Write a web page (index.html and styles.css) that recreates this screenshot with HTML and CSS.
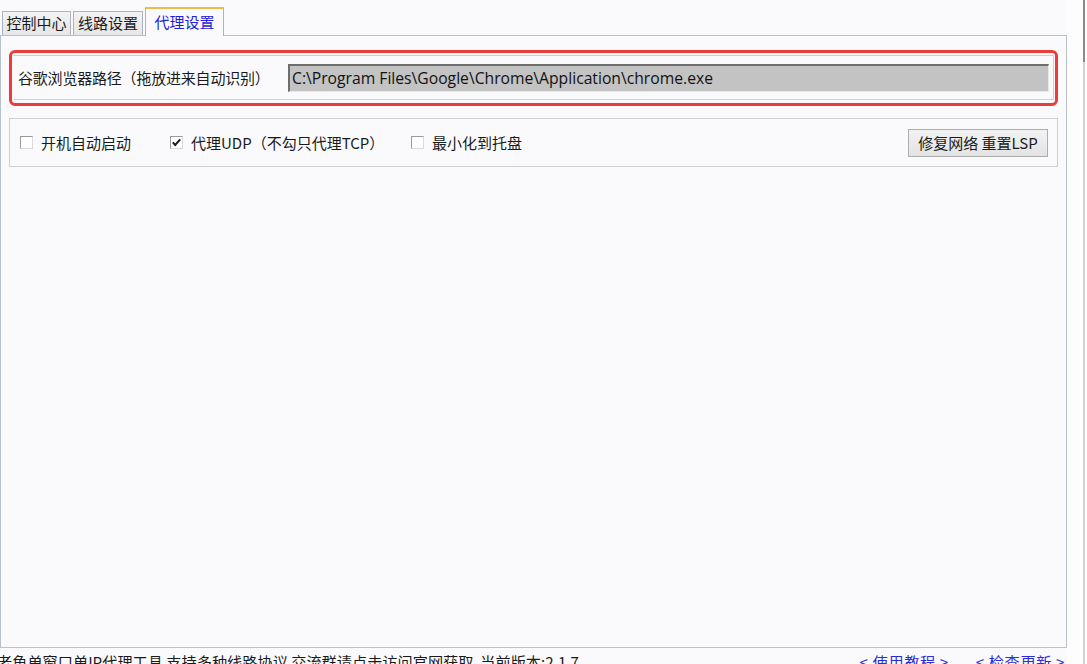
FILE: index.html
```html
<!DOCTYPE html>
<html lang="zh-CN">
<head>
<meta charset="utf-8">
<title>代理设置</title>
<link rel="stylesheet" href="styles.css">
</head>
<body>
<div class="window">
  <div class="main">
    <div class="tabs">
      <div class="tab">控制中心</div>
      <div class="tab">线路设置</div>
      <div class="tab active">代理设置</div>
    </div>
    <div class="pane">
      <div class="highlight">
        <div class="group path-group">
          <span class="path-label">谷歌浏览器路径（拖放进来自动识别）</span>
          <div class="path-field">C:\Program Files\Google\Chrome\Application\chrome.exe</div>
        </div>
      </div>
      <div class="group options">
        <label class="check"><span class="box"></span>开机自动启动</label>
        <label class="check"><span class="box checked"><svg viewBox="0 0 13 13" width="13" height="13"><path d="M2.8 6.3 L5.2 9 L10.2 3.4" fill="none" stroke="#1a1a1a" stroke-width="2"/></svg></span>代理UDP（不勾只代理TCP）</label>
        <label class="check"><span class="box"></span>最小化到托盘</label>
        <button class="btn">修复网络 重置LSP</button>
      </div>
    </div>
    <div class="status">
      <span class="status-text">老鱼单窗口单IP代理工具 支持多种线路协议 交流群请点击访问官网获取&nbsp;&nbsp;当前版本:2.1.7</span>
      <span class="links"><a class="link">&lt; 使用教程 &gt;</a><a class="link">&lt; 检查更新 &gt;</a></span>
    </div>
  </div>
  <div class="side">
    <div class="rail"></div>
  </div>
</div>
</body>
</html>
```

FILE: styles.css
```css
* { box-sizing: border-box; }

html, body {
  margin: 0;
  padding: 0;
  background: #fafafc;
  overflow: hidden;
}

body {
  font-family: "Noto Sans CJK SC", "Noto Sans", sans-serif;
  font-size: 15px;
  color: #1a1a1a;
}

.window {
  display: flex;
  width: 1087px;
  height: 664px;
}

.main {
  width: 1067px;
  display: flex;
  flex-direction: column;
}

/* tab strip */
.tabs {
  height: 35px;
  display: flex;
  align-items: flex-end;
  padding-left: 2px;
  gap: 2px;
}

.tab {
  height: 24px;
  width: 69px;
  text-align: center;
  border: 1px solid #aab3be;
  border-bottom: none;
  background: linear-gradient(#f3f3f3, #e6e6e6);
  font-size: 15px;
  line-height: 22px;
  white-space: nowrap;
}

.tab:nth-child(2) { width: 70px; }

.tab.active {
  height: 29px;
  width: 79px;
  background: #fafafc;
  border-top: 2px solid #f3b84a;
  color: #1f1fd6;
  line-height: 26px;
  margin-bottom: -1px;
  position: relative;
  z-index: 1;
}

/* page body */
.pane {
  flex: 1;
  border: 1px solid #b7c1cc;
  padding: 14px 8px 0 8px;
  display: flex;
  flex-direction: column;
  gap: 12px;
}

.highlight {
  border: 3px solid #ec3b3b;
  border-radius: 6px;
  padding: 2px 1px 3px 1px;
}

.group {
  border: 1px solid #cfcfcf;
  background: #fafafc;
}

.path-group {
  height: 45px;
  display: flex;
  align-items: center;
  padding: 0 4px 0 4px;
  border-left-color: transparent;
}

.path-label {
  width: 270px;
  font-size: 15px;
  letter-spacing: -0.2px;
  white-space: nowrap;
}

.path-field {
  flex: 1;
  height: 28px;
  background: #c3c3c3;
  border-top: 2px solid #6e6e6e;
  border-left: 2px solid #6e6e6e;
  border-right: 1px solid #e8e8e8;
  border-bottom: 1px solid #e8e8e8;
  font-family: "Open Sans", "Noto Sans", sans-serif;
  font-size: 15.7px;
  line-height: 24px;
  padding-left: 2px;
  color: #111;
  white-space: nowrap;
}

.options {
  height: 49px;
  display: flex;
  align-items: center;
  padding: 0 9px 0 10px;
}

.check {
  display: flex;
  align-items: center;
  gap: 8px;
  font-size: 15px;
  white-space: nowrap;
}

.check:nth-child(1) { width: 150px; }
.check:nth-child(2) { width: 241px; }

.box {
  width: 13px;
  height: 13px;
  border: 1px solid #9a9a9a;
  border-right-color: #dadada;
  border-bottom-color: #dadada;
  background: #fff;
  display: inline-flex;
}

.box svg { margin: -1px; }

.btn {
  margin-left: auto;
  width: 140px;
  height: 28px;
  border: 1px solid #adadad;
  background: linear-gradient(#f2f2f2, #e3e3e3);
  font-family: "Noto Sans CJK SC", "Noto Sans", sans-serif;
  font-size: 15px;
  color: #1a1a1a;
  padding: 0;
}

/* status line */
.status {
  height: 16px;
  display: flex;
  overflow: hidden;
  font-size: 15.2px;
  line-height: 20px;
  padding-top: 3px;
  white-space: nowrap;
}

.status-text {
  margin-left: -3px;
}

.links {
  margin-left: auto;
  display: flex;
  gap: 27px;
  padding-right: 2px;
}

.link {
  color: #2b2bd9;
  letter-spacing: 0.6px;
}

/* right edge strip */
.side {
  flex: 1;
  display: flex;
  justify-content: flex-end;
  padding-right: 2px;
  background: #fdfdfd;
}

.rail {
  width: 2px;
  background: linear-gradient(#8a8a8a 0, #8a8a8a 62px, #d2d2d2 62px, #d2d2d2 100%);
}
```
